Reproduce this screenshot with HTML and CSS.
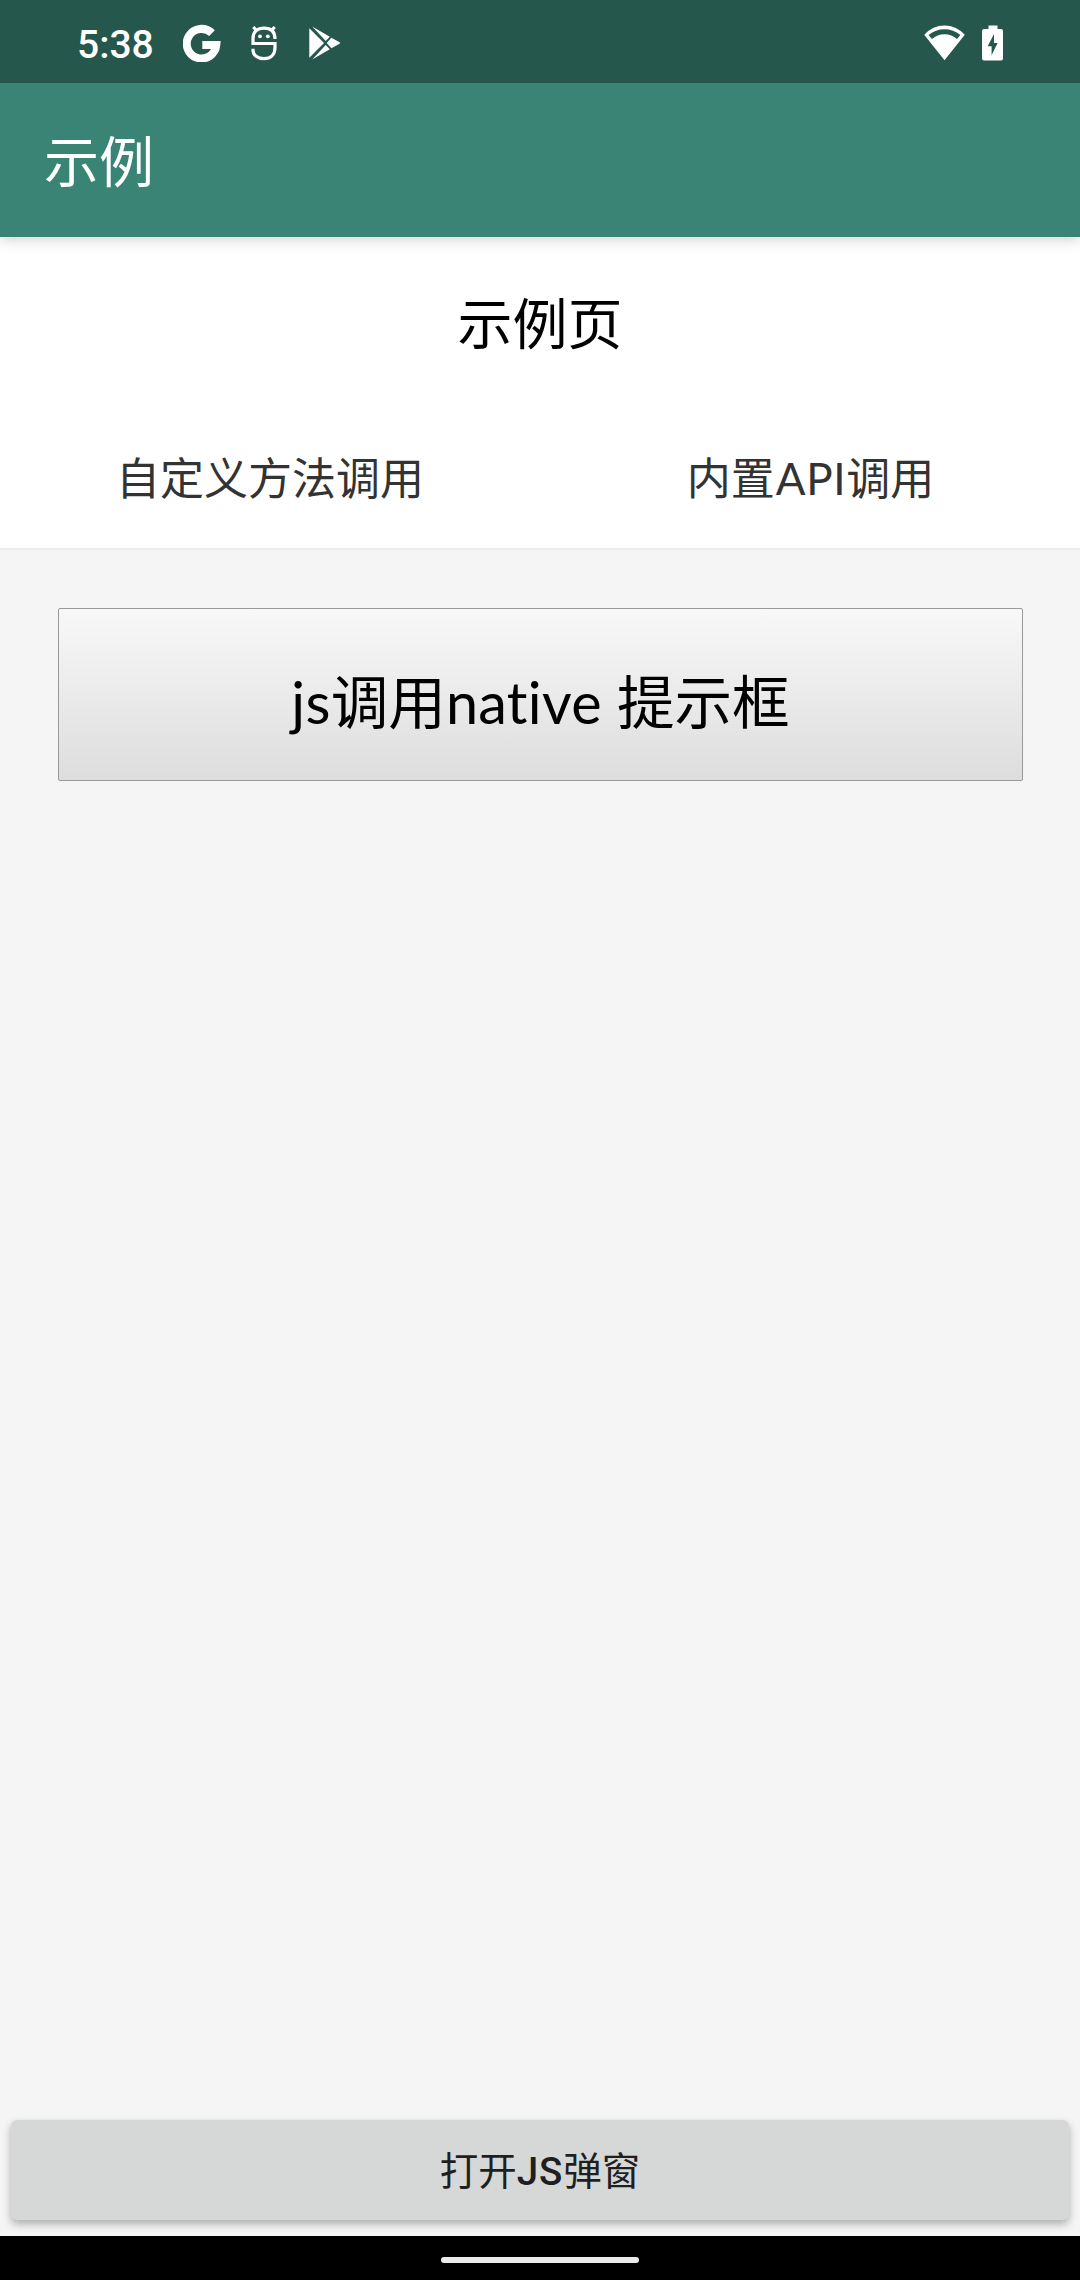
FILE: index.html
```html
<!DOCTYPE html>
<html lang="zh-CN">
<head>
<meta charset="utf-8">
<title>示例</title>
<link rel="stylesheet" href="styles.css">
</head>
<body>
<div class="status-bar">
  <span class="clock">5:38</span>
  <svg class="icon-google" width="38" height="38" viewBox="0 0 38 38"><path d="M29 9.2A14.8 14.8 0 1 0 33.3 21H19.3" fill="none" stroke="#fff" stroke-width="8"/></svg>
  <svg class="icon-bot" width="26" height="36" viewBox="0 0 26 36" fill="none" stroke="#fff" stroke-width="3.2"><path d="M24 14C24 6.500 19.500 3.200 13 3.200S2 6.500 2 13.500V18.500H24V22.500C24 30 19.500 33.600 13 33.600S2 30 2 25V23.700M5.500 5.500L2.300 2M20.500 5.500L23.700 2"/><circle cx="9" cy="11.300" r="1.900" fill="#fff" stroke="none"/><circle cx="16.800" cy="11.300" r="1.900" fill="#fff" stroke="none"/></svg>
  <svg class="icon-play" width="32" height="34" viewBox="0 0 32 34" fill="#fff"><path d="M.3 2.300L15 17 .3 31.700zM3.200.5L20.800 10.700 16.700 14.900zM22.400 11.700L30.600 16.300Q31.500 17 30.600 17.700L22.400 22.300 17.700 17zM3.200 33.500L20.800 23.300 16.700 19.100z"/></svg>
  <svg class="icon-wifi" width="42" height="36" viewBox="0 0 42 36"><path fill="#fff" fill-rule="evenodd" d="M.2 9.700Q9 .5 20.500.5T40.800 9.700L20.500 35.200zM4.600 9.900L8 14Q13.200 9.200 20.500 9.200T33 14L36.400 9.900Q29.500 4.300 20.500 4.300T4.600 9.900z"/></svg>
  <svg class="icon-battery" width="22" height="36" viewBox="0 0 22 36"><path fill="#fff" fill-rule="evenodd" d="M6.500.5H15.500V4H19Q21 4 21 6V33.500Q21 35.500 19 35.500H2Q0 35.500 0 33.500V6Q0 4 2 4H6.500zM12 9L5.700 21.300H9.600V30.300L15.600 18H12z"/></svg>
</div>
<header class="app-bar">示例</header>
<section class="page-head">
  <h1 class="page-title">示例页</h1>
  <nav class="tabs"><span class="tab">自定义方法调用</span><span class="tab">内置<span class="tab-latin">API</span>调用</span></nav>
</section>
<main class="content">
  <button class="native-button"><span class="latin">js</span>调用<span class="latin">native </span>提示框</button>
</main>
<footer class="bottom"><button class="dialog-button">打开<b>JS</b>弹窗</button></footer>
<div class="nav-bar"><div class="nav-pill"></div></div>
</body>
</html>
```
FILE: styles.css
```css
* { box-sizing: border-box; }

body {
  margin: 0;
  width: 1080px;
  height: 2280px;
  display: flex;
  flex-direction: column;
  overflow: hidden;
  background: #f5f5f5;
  font-family: "Noto Sans CJK SC", sans-serif;
}

button { margin: 0; padding: 0; font-family: inherit; }

.status-bar {
  height: 83px;
  flex: none;
  display: flex;
  align-items: center;
  padding: 3px 76px 0 77px;
  background: #25574d;
  position: relative;
  z-index: 1;
}
.clock {
  width: 106px;
  color: #fff;
  font: 500 39px/46px Roboto, sans-serif;
  padding-top: 4px;
}
.icon-google { margin-right: 30px; }
.icon-bot { margin-right: 32px; }
.icon-wifi { margin-left: auto; margin-right: 16px; }

.app-bar {
  height: 154px;
  flex: none;
  padding-left: 44px;
  background: #3a8475;
  color: #fff;
  font-size: 55px;
  line-height: 150px;
  box-shadow: 0 2px 14px rgba(0, 0, 0, .2);
  position: relative;
}

.page-head {
  height: 313px;
  flex: none;
  background: #fff;
  border-bottom: 2px solid #ececec;
}
.page-title {
  margin: 0;
  height: 173px;
  font-size: 55px;
  font-weight: 400;
  line-height: 167px;
  text-align: center;
  color: #000;
}
.tabs {
  display: grid;
  grid-template-columns: 1fr 1fr;
  height: 138px;
  color: #333;
  font-size: 44px;
  line-height: 133px;
  text-align: center;
}
.tab-latin { margin-left: 1px; font-family: Lato, sans-serif; letter-spacing: .7px; }
.tab:last-child { padding-left: 1px; }

.content { flex: 1; padding: 58px 57px 0 58px; }
.native-button {
  display: block;
  width: 965px;
  height: 173px;
  padding-top: 8px;
  border: 1px solid #999;
  border-radius: 2px;
  background: linear-gradient(#f8f8f8, #ddd);
  color: #000;
  font-size: 57.6px;
}
.latin { font-family: Lato, sans-serif; font-variant-ligatures: none; letter-spacing: .3px; }

.bottom { height: 116px; flex: none; padding: 0 11px; }
.dialog-button {
  display: block;
  width: 100%;
  height: 100px;
  padding-bottom: 4px;
  border: 0;
  border-radius: 6px;
  background: #d6d8d7;
  box-shadow: 0 4px 9px rgba(0, 0, 0, .3);
  color: #1f1f1f;
  font-size: 38.5px;
}
.dialog-button b { font-family: Roboto, sans-serif; font-weight: 500; letter-spacing: .8px; }

.nav-bar {
  height: 44px;
  flex: none;
  display: flex;
  justify-content: center;
  padding-top: 21px;
  background: #000;
  position: relative;
}
.nav-pill { width: 198px; height: 6px; border-radius: 3px; background: #ebebeb; }
```
